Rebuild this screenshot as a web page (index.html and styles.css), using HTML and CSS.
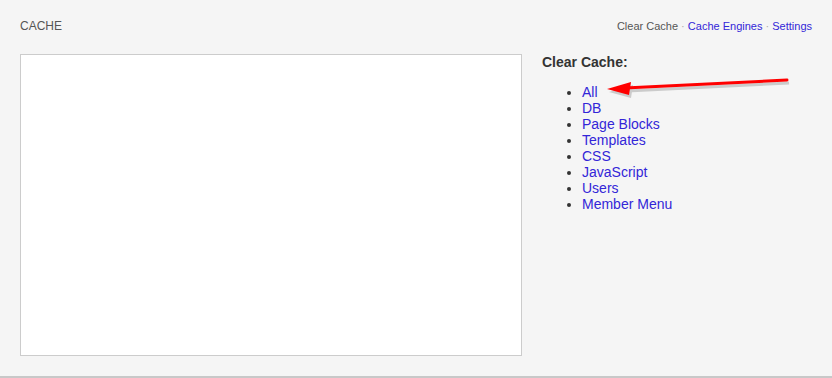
FILE: index.html
```html
<!DOCTYPE html>
<html lang="en">
<head>
    <meta charset="UTF-8">
    <title>Cache</title>
    <link rel="stylesheet" href="styles.css">
</head>
<body>
    <div class="page">
        <div class="header">
            <div class="title">CACHE</div>
            <div class="nav">
                <span class="current">Clear Cache</span>
                <span class="sep">·</span>
                <a href="#">Cache Engines</a>
                <span class="sep">·</span>
                <a href="#">Settings</a>
            </div>
        </div>
        <div class="content">
            <div class="output-box"></div>
            <div class="side">
                <h3>Clear Cache:</h3>
                <ul class="cache-list">
                    <li><a href="#">All</a></li>
                    <li><a href="#">DB</a></li>
                    <li><a href="#">Page Blocks</a></li>
                    <li><a href="#">Templates</a></li>
                    <li><a href="#">CSS</a></li>
                    <li><a href="#">JavaScript</a></li>
                    <li><a href="#">Users</a></li>
                    <li><a href="#">Member Menu</a></li>
                </ul>
            </div>
        </div>
    </div>
    <svg class="arrow" width="832" height="378" viewBox="0 0 832 378">
        <g transform="translate(2,3)" fill="#999" stroke="#999" opacity="0.45">
            <line x1="787" y1="80" x2="625" y2="88" stroke-width="3"/>
            <polygon points="607,89 631,82 629,95" stroke="none"/>
        </g>
        <line x1="787" y1="80" x2="625" y2="88" stroke="#f00" stroke-width="3" stroke-linecap="round"/>
        <polygon points="607,89 631,82 629,95" fill="#f00"/>
    </svg>
</body>
</html>
```

FILE: styles.css
```css
body {
    margin: 0;
    background: #f5f5f5;
    font-family: Arial, "Liberation Sans", sans-serif;
    color: #333;
    height: 378px;
    box-sizing: border-box;
    border-bottom: 2px solid #c8c8c8;
    position: relative;
}

.page {
    padding: 0 20px;
}

.header {
    display: flex;
    justify-content: space-between;
    align-items: center;
    height: 52px;
}

.title {
    font-size: 12px;
    color: #555;
}

.nav {
    font-size: 11px;
    color: #555;
}

.nav a {
    color: #3326d8;
    text-decoration: none;
}

.nav .sep {
    color: #aaa;
}

.content {
    display: flex;
    gap: 20px;
    margin-top: 2px;
}

.output-box {
    width: 500px;
    height: 300px;
    background: #fff;
    border: 1px solid #ccc;
}

.side h3 {
    margin: 0;
    font-size: 14px;
    font-weight: bold;
    color: #333;
    line-height: 16px;
}

.cache-list {
    margin: 14px 0 0;
    padding-left: 40px;
    font-size: 14px;
    line-height: 16px;
}

.cache-list a {
    color: #3326d8;
    text-decoration: none;
}

.arrow {
    position: absolute;
    left: 0;
    top: 0;
    pointer-events: none;
}
```
